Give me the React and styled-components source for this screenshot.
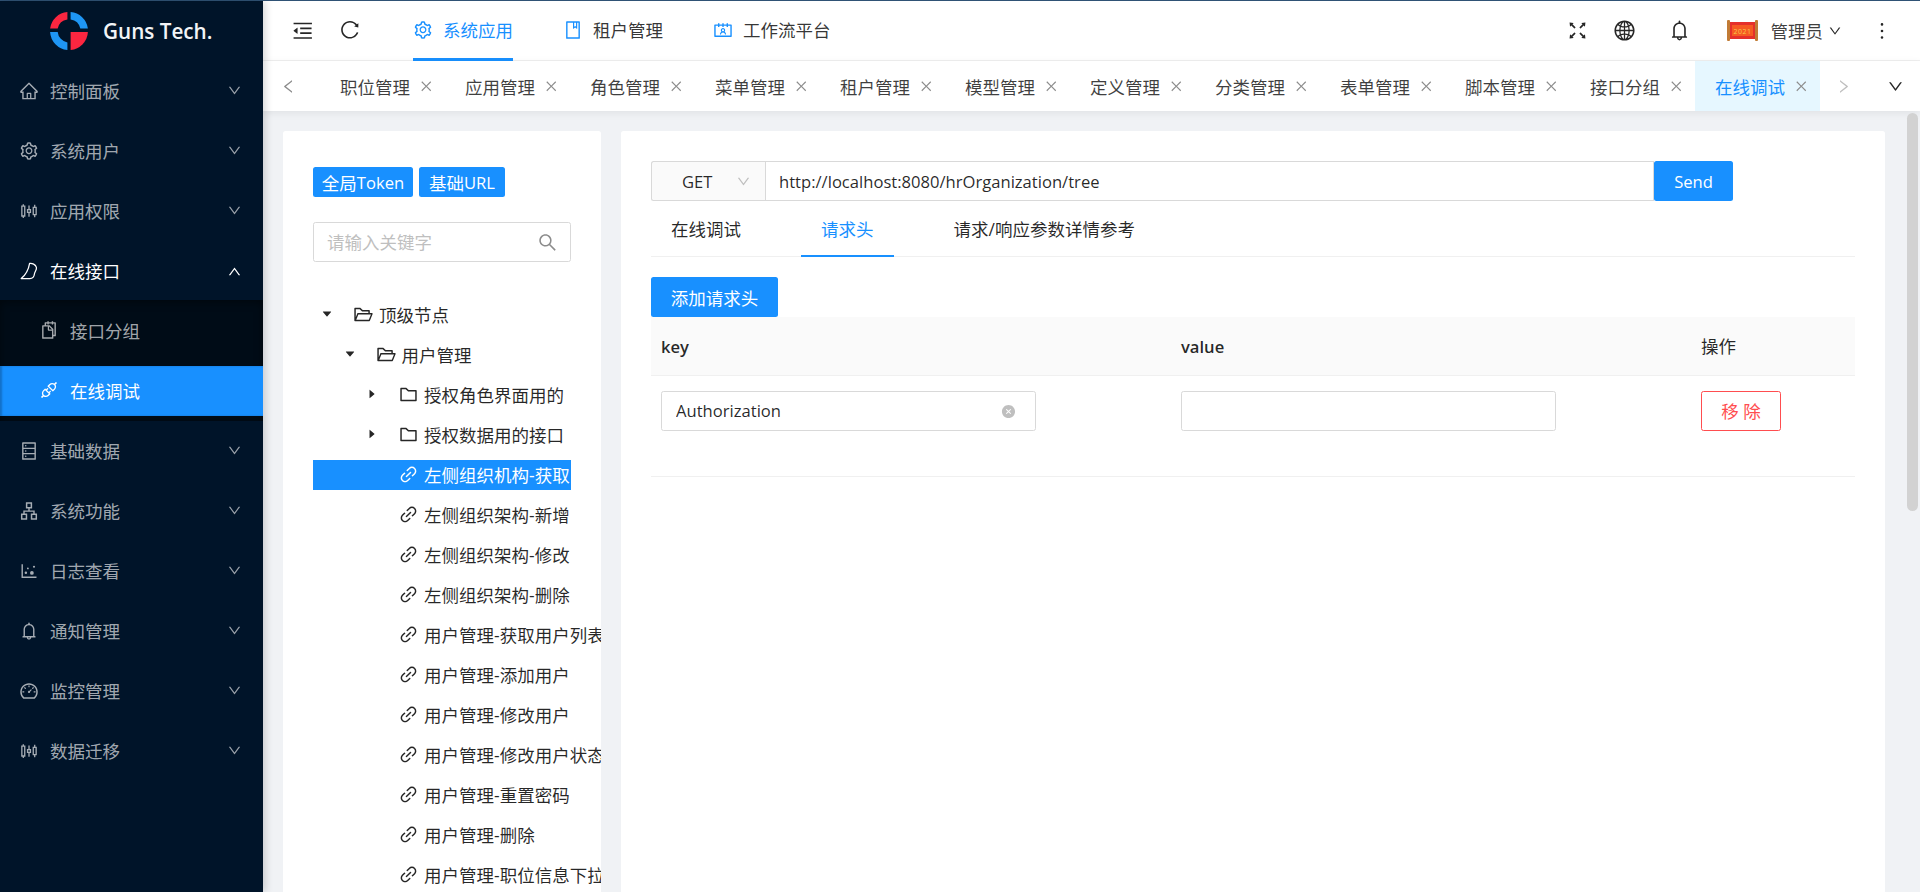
import React from "react";
import styled, { createGlobalStyle } from "styled-components";
import {
  AiOutlineHome, AiOutlineSetting, AiOutlineSliders, AiOutlineApi, AiOutlineDatabase,
  AiOutlineApartment, AiOutlineDotChart, AiOutlineBell, AiOutlineDashboard, AiOutlineDown,
  AiOutlineUp, AiOutlineMenuFold, AiOutlineReload, AiOutlineBook, AiOutlineContacts,
  AiOutlineFullscreen, AiOutlineGlobal, AiOutlineMore, AiOutlineClose, AiOutlineLeft,
  AiOutlineRight, AiOutlineSearch, AiOutlineFolderOpen, AiOutlineFolder, AiOutlineLink,
  AiFillCaretDown, AiFillCaretRight, AiFillCloseCircle, AiOutlineSnippets,
} from "react-icons/ai";

const FONT = `"Open Sans", "Noto Sans CJK SC", sans-serif`;
const LATIN_SIZE = "16.6px";

const Global = createGlobalStyle`
  html, body { margin: 0; padding: 0; height: 100%; overflow: hidden; }
  body { font-family: ${FONT}; font-size: 17.5px; color: rgba(0,0,0,.85); }
  * { box-sizing: border-box; }
  svg { flex: none; }
`;

const Shell = styled.div`
  display: flex; height: 892px; width: 1920px; position: relative;
  border-top: 1px solid #2f5275;
`;
const Sidebar = styled.aside`
  width: 263px; flex: none; background: #001429; box-shadow: 2px 0 8px rgba(29,35,41,.2); position: relative; z-index: 3;
`;
const Brand = styled.div`
  height: 59px; display: flex; align-items: center; padding: 0 0 0 50px; gap: 15px;
`;
const BrandName = styled.span`
  font-size: 20.7px; font-weight: 600; color: #f2f4f7; white-space: nowrap;
`;
const Menu = styled.nav`
  display: flex; flex-direction: column; gap: 10px; padding-top: 7px;
`;
const Item = styled.div`
  height: 50px; display: flex; align-items: center; padding: 0 0 3px 20px; position: relative;
  color: ${p => (p.$open ? "#fff" : "rgba(255,255,255,.65)")};
`;
const ItemIcon = styled.span`
  width: 18px; margin-right: 12px; display: flex; align-items: center; justify-content: center; font-size: 20px;
`;
const Arrow = styled.span`
  position: absolute; left: 227px; top: ${p => (p.$open ? 17 : 16)}px; display: flex; font-size: 15px;
  color: ${p => (p.$open ? "#fff" : "rgba(255,255,255,.6)")};
`;
const Group = styled.div`
  display: flex; flex-direction: column;
`;
const SubList = styled.div`
  background: #000c17; margin-top: 3px; padding: 6px 0 5px; display: flex; flex-direction: column; gap: 10px; margin-bottom: -4px;
  box-shadow: inset 0 2px 8px rgba(0,0,0,.45);
`;
const SubItem = styled.div`
  height: 50px; display: flex; align-items: center; padding: 0 0 2px 40px;
  color: ${p => (p.$active ? "#fff" : "rgba(255,255,255,.65)")};
  background: ${p => (p.$active ? "#1890ff" : "transparent")};
  box-shadow: ${p => (p.$active ? "inset 2px 0 2px rgba(0,21,41,.25)" : "none")};
`;

const Main = styled.div`
  flex: 1; min-width: 0; display: flex; flex-direction: column;
`;
const Header = styled.header`
  height: 60px; flex: none; display: flex; align-items: center; background: #fff; border-bottom: 1px solid #f0f0f0;
`;
const HeaderTool = styled.span`
  width: 47px; display: flex; justify-content: center; font-size: ${p => p.$size}px; color: #262626;
`;
const HeaderTools = styled.div`
  display: flex; margin-left: 16px; margin-right: 40px;
`;
const Nav = styled.div`
  display: flex; gap: 50px; height: 100%; flex: 1;
`;
const NavItem = styled.div`
  height: 60px; display: flex; align-items: center; gap: 10px; position: relative;
  color: ${p => (p.$active ? "#1890ff" : "rgba(0,0,0,.8)")};
  border-bottom: 3px solid ${p => (p.$active ? "#1890ff" : "transparent")};
  & svg { color: #1890ff; font-size: 20px; }
`;
const Actions = styled.div`
  display: flex; align-items: center; margin-right: 26px;
`;
const Action = styled.span`
  display: flex; font-size: ${p => p.$size || 23}px; margin-left: ${p => p.$gap || 0}px; color: #262626;
`;
const User = styled.div`
  display: flex; align-items: center; margin-left: 36px; margin-right: 28px;
`;
const UserName = styled.span`
  margin: 0 5px 0 13px; color: rgba(0,0,0,.75);
`;

const TabBar = styled.div`
  height: 50px; flex: none; display: flex; align-items: stretch; background: #fff;
  box-shadow: 0 2px 8px rgba(0,0,0,.07); position: relative; z-index: 2;
`;
const TabNav = styled.div`
  width: ${p => p.$w}px; flex: none; display: flex; align-items: center; justify-content: center;
  padding-right: ${p => p.$shift || 0}px;
  font-size: 17px; color: ${p => p.$color};
`;
const Tab = styled.div`
  width: 125px; flex: none; padding-left: 20px; display: flex; align-items: center; gap: 9px; white-space: nowrap;
  background: ${p => (p.$active ? "#e6f7ff" : "#fff")};
  color: ${p => (p.$active ? "#1890ff" : "rgba(0,0,0,.75)")};
  & svg { color: #8c8c8c; font-size: 14.5px; }
`;

const Scroller = styled.div`
  flex: 1; min-height: 0; overflow: hidden; background: #f0f2f5;
`;
const ScrollThumb = styled.div`
  position: absolute; right: 2px; top: 112px; width: 11px; height: 398px; border-radius: 6px; background: #d2d2d2; z-index: 4;
`;
const Content = styled.div`
  display: flex; gap: 20px; padding: 20px 35px 0 20px; min-height: 1530px; align-items: stretch;
`;
const Card = styled.section`
  background: #fff; border-radius: 2.5px; overflow: hidden; min-width: 0;
`;
const LeftCard = styled(Card)`
  width: 318px; flex: none; padding: 36px 30px;
`;
const RightCard = styled(Card)`
  flex: 1; padding: 30px;
`;
const ButtonRow = styled.div`
  display: flex; gap: 6px; margin-bottom: 25px;
`;
const Latin = styled.span`
  font-size: ${LATIN_SIZE};
  font-weight: ${p => (p.$bold ? 600 : 400)};
`;
const Primary = styled.button`
  height: ${p => p.$h || 40}px; padding: 0; border: 0; border-radius: 2.5px; background: #1890ff; color: #fff;
  font: inherit; white-space: nowrap; display: flex; align-items: center; justify-content: center; flex: none;
  width: ${p => p.$w}px;
`;
const SearchBox = styled.div`
  height: 40px; border: 1px solid #d9d9d9; border-radius: 2.5px; display: flex; align-items: center; padding: 0 12px 0 13px; margin-bottom: 38px;
  & svg { color: #8c8c8c; font-size: 21px; }
`;
const SearchInput = styled.input`
  flex: 1; min-width: 0; border: 0; outline: 0; padding: 0; font: inherit;
  &::placeholder { color: #bfbfbf; opacity: 1; }
`;
const Tree = styled.div`
  display: flex; flex-direction: column;
`;
const Node = styled.div`
  height: 40px; white-space: nowrap; padding-bottom: 10px;
`;
const NodeInner = styled.div`
  height: 30px; display: flex; align-items: center; padding: 0 0 2px ${p => p.$level * 22.5}px;
  background: ${p => (p.$selected ? "#1890ff" : "transparent")};
  color: ${p => (p.$selected ? "#fff" : "rgba(0,0,0,.85)")};
`;
const Caret = styled.span`
  width: 28px; flex: none; display: flex; justify-content: center; font-size: 12px; color: #262626; margin-right: 13px;
`;
const NodeIcon = styled.span`
  width: 19px; flex: none; display: flex; justify-content: center; margin-right: 6px; font-size: 21px;
`;

const UrlRow = styled.div`
  display: flex; align-items: stretch; height: 40px;
`;
const Method = styled.div`
  width: 114px; flex: none; background: #fafafa; border: 1px solid #d9d9d9; border-right: 0; border-radius: 2.5px 0 0 2.5px;
  display: flex; align-items: center; padding-left: 30px; gap: 24px; font-size: ${LATIN_SIZE};
  & svg { color: #bfbfbf; font-size: 15px; }
`;
const UrlInput = styled.input`
  width: 889px; flex: none; height: 40px; border: 1px solid #d9d9d9; padding: 0 13px; font: inherit; font-size: ${LATIN_SIZE}; outline: 0; color: rgba(0,0,0,.85);
`;
const Tabs = styled.div`
  display: flex; gap: 40px; height: 56px; border-bottom: 1px solid #f0f0f0; margin-bottom: 20px;
`;
const TabLabel = styled.div`
  height: 56px; padding: 0 20px; display: flex; align-items: center; white-space: nowrap;
  color: ${p => (p.$active ? "#1890ff" : "rgba(0,0,0,.85)")};
  border-bottom: 2.5px solid ${p => (p.$active ? "#1890ff" : "transparent")};
`;
const Table = styled.table`
  width: 1204px; table-layout: fixed; border-collapse: collapse;
`;
const Th = styled.th`
  height: 58px; padding: 0 10px; text-align: left; font-weight: 400; background: #fafafa; border-bottom: 1px solid #f0f0f0;
  width: ${p => p.$w}px; color: rgba(0,0,0,.85);
`;
const Td = styled.td`
  padding: 15px 10px 45px; border-bottom: 1px solid #f0f0f0; vertical-align: top;
`;
const FieldWrap = styled.div`
  width: 375px; position: relative;
`;
const Field = styled.input`
  width: 100%; height: 40px; display: block; border: 1px solid #d9d9d9; border-radius: 2.5px; padding: 0 14px; font: inherit; font-size: ${LATIN_SIZE}; outline: 0; color: rgba(0,0,0,.85); background: #fff;
`;
const Clear = styled.span`
  position: absolute; right: 20px; top: 13px; display: flex; font-size: 15px; color: #bfbfbf;
`;
const Danger = styled.button`
  width: 80px; height: 40px; border: 1px solid #ff4d4f; border-radius: 2.5px; background: #fff; color: #ff4d4f; font: inherit; padding: 0; display: block;
`;

const Logo = () => (
  <svg width="38" height="38" viewBox="0 0 38 38">
    <path d="M17.4 0.1A19 19 0 0 0 0.1 16.6L7.7 16.6A11.6 11.6 0 0 1 17.4 7.6Z" fill="#fb2640" />
    <path d="M20.6 0.1A19 19 0 0 1 37.9 16.6L30.3 16.6A11.6 11.6 0 0 0 20.6 7.6Z" fill="#1e96f4" />
    <path d="M0.1 20A19 19 0 0 0 17.4 37.9L17.4 30.4A11.6 11.6 0 0 1 7.7 20Z" fill="#1e96f4" />
    <path d="M20.6 20L37.9 20A19 19 0 0 1 20.6 37.9Z" fill="#fb2640" />
  </svg>
);
const Leaf = () => (
  <svg width="18" height="18" viewBox="0 0 18 18" fill="none" stroke="currentColor" strokeWidth="1.25" strokeLinejoin="round">
    <path d="M1.2 16.6C5 13.5 8.5 8 9.6 1.4C12 1 15.6 2.4 16.4 5.4C17 8 14.6 9.6 14.4 12C14.2 14.4 12.6 16.4 9.8 16.6C7 16.8 4 16.7 1.2 16.6Z" />
  </svg>
);
const Scroll = () => (
  <svg width="31" height="21" viewBox="0 0 31 21">
    <rect x="2" y="2" width="27" height="17" fill="#e5302b" />
    <rect x="5" y="5" width="21" height="11" fill="#f65a22" />
    <rect x="0" y="0" width="3" height="21" rx="1" fill="#c17b35" />
    <rect x="28" y="0" width="3" height="21" rx="1" fill="#c17b35" />
    <text x="15.5" y="13.5" fontSize="7" textAnchor="middle" fill="#f7c94a" fontFamily="Open Sans" letterSpacing="0.5">2021</text>
  </svg>
);

const mainMenu = [
  { label: "控制面板", icon: <AiOutlineHome /> },
  { label: "系统用户", icon: <AiOutlineSetting /> },
  { label: "应用权限", icon: <AiOutlineSliders /> },
];
const restMenu = [
  { label: "基础数据", icon: <AiOutlineDatabase /> },
  { label: "系统功能", icon: <AiOutlineApartment /> },
  { label: "日志查看", icon: <AiOutlineDotChart /> },
  { label: "通知管理", icon: <AiOutlineBell /> },
  { label: "监控管理", icon: <AiOutlineDashboard /> },
  { label: "数据迁移", icon: <AiOutlineSliders /> },
];
const tabs = ["职位管理", "应用管理", "角色管理", "菜单管理", "租户管理", "模型管理", "定义管理", "分类管理", "表单管理", "脚本管理", "接口分组", "在线调试"];
const leaves = ["左侧组织机构-获取", "左侧组织架构-新增", "左侧组织架构-修改", "左侧组织架构-删除", "用户管理-获取用户列表", "用户管理-添加用户", "用户管理-修改用户", "用户管理-修改用户状态", "用户管理-重置密码", "用户管理-删除", "用户管理-职位信息下拉"];

const MenuRow = ({ label, icon, open }) => (
  <Item $open={open}>
    <ItemIcon>{icon}</ItemIcon>
    {label}
    <Arrow $open={open}>{open ? <AiOutlineUp /> : <AiOutlineDown />}</Arrow>
  </Item>
);

const Branch = ({ level, label, open }) => (
  <Node>
    <NodeInner $level={level}>
      <Caret>{open ? <AiFillCaretDown /> : <AiFillCaretRight />}</Caret>
      <NodeIcon>{open ? <AiOutlineFolderOpen /> : <AiOutlineFolder />}</NodeIcon>
      {label}
    </NodeInner>
  </Node>
);

export default function App() {
  return (
    <Shell>
      <Global />
      <Sidebar>
        <Brand><Logo /><BrandName>Guns Tech.</BrandName></Brand>
        <Menu>
          {mainMenu.map(m => <MenuRow key={m.label} {...m} />)}
          <Group>
            <MenuRow label="在线接口" icon={<Leaf />} open />
            <SubList>
              <SubItem><ItemIcon><AiOutlineSnippets /></ItemIcon>接口分组</SubItem>
              <SubItem $active><ItemIcon><AiOutlineApi /></ItemIcon>在线调试</SubItem>
            </SubList>
          </Group>
          {restMenu.map(m => <MenuRow key={m.label} {...m} />)}
        </Menu>
      </Sidebar>
      <Main>
        <Header>
          <HeaderTools>
            <HeaderTool $size={23.5}><AiOutlineMenuFold /></HeaderTool>
            <HeaderTool $size={21.5}><AiOutlineReload /></HeaderTool>
          </HeaderTools>
          <Nav>
            <NavItem $active><AiOutlineSetting />系统应用</NavItem>
            <NavItem><AiOutlineBook />租户管理</NavItem>
            <NavItem><AiOutlineContacts />工作流平台</NavItem>
          </Nav>
          <Actions>
            <Action><AiOutlineFullscreen /></Action>
            <Action $gap={24}><AiOutlineGlobal /></Action>
            <Action $gap={32}><AiOutlineBell /></Action>
            <User>
              <Scroll />
              <UserName>管理员</UserName>
              <Action $size={14}><AiOutlineDown /></Action>
            </User>
            <Action $size={24}><AiOutlineMore /></Action>
          </Actions>
        </Header>
        <TabBar>
          <TabNav $w={57} $shift={7} $color="#8c8c8c"><AiOutlineLeft /></TabNav>
          {tabs.map((t, i) => (
            <Tab key={t} $active={i === tabs.length - 1}>{t}<AiOutlineClose /></Tab>
          ))}
          <TabNav $w={50} $shift={4} $color="#bfbfbf"><AiOutlineRight /></TabNav>
          <TabNav $w={50} $color="#262626"><AiOutlineDown /></TabNav>
        </TabBar>
        <Scroller>
          <Content>
            <LeftCard>
              <ButtonRow>
                <Primary $h={30} $w={100}>全局<Latin>Token</Latin></Primary>
                <Primary $h={30} $w={86}>基础<Latin>URL</Latin></Primary>
              </ButtonRow>
              <SearchBox>
                <SearchInput placeholder="请输入关键字" readOnly />
                <AiOutlineSearch />
              </SearchBox>
              <Tree>
                <Branch level={0} label="顶级节点" open />
                <Branch level={1} label="用户管理" open />
                <Branch level={2} label="授权角色界面用的" />
                <Branch level={2} label="授权数据用的接口" />
                {leaves.map((l, i) => (
                  <Node key={l}>
                    <NodeInner $level={2} $selected={i === 0}>
                      <Caret />
                      <NodeIcon><AiOutlineLink /></NodeIcon>
                      {l}
                    </NodeInner>
                  </Node>
                ))}
              </Tree>
            </LeftCard>
            <RightCard>
              <UrlRow>
                <Method>GET<AiOutlineDown /></Method>
                <UrlInput readOnly value="http://localhost:8080/hrOrganization/tree" />
                <Primary $w={79}><Latin>Send</Latin></Primary>
              </UrlRow>
              <Tabs>
                <TabLabel>在线调试</TabLabel>
                <TabLabel $active>请求头</TabLabel>
                <TabLabel>请求/响应参数详情参考</TabLabel>
              </Tabs>
              <Primary $w={127}>添加请求头</Primary>
              <Table>
                <thead>
                  <tr><Th $w={520}><Latin $bold>key</Latin></Th><Th $w={520}><Latin $bold>value</Latin></Th><Th $w={164}>操作</Th></tr>
                </thead>
                <tbody>
                  <tr>
                    <Td>
                      <FieldWrap>
                        <Field readOnly value="Authorization" />
                        <Clear><AiFillCloseCircle /></Clear>
                      </FieldWrap>
                    </Td>
                    <Td><FieldWrap><Field readOnly value="" /></FieldWrap></Td>
                    <Td><Danger>移 除</Danger></Td>
                  </tr>
                </tbody>
              </Table>
            </RightCard>
          </Content>
        </Scroller>
      </Main>
      <ScrollThumb />
    </Shell>
  );
}
